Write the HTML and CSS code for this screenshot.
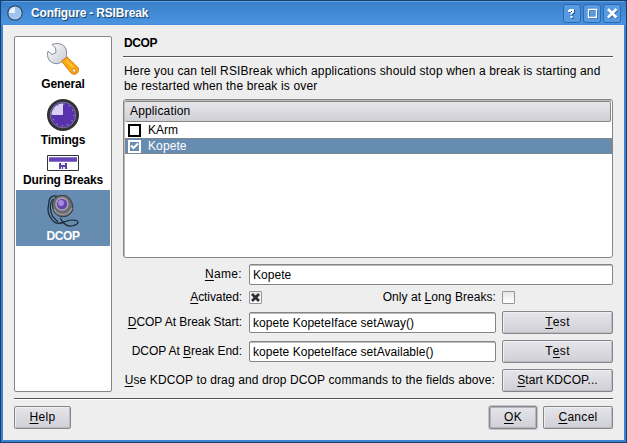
FILE: index.html
```html
<!DOCTYPE html>
<html lang="en">
<head>
<meta charset="utf-8">
<title>Configure - RSIBreak</title>
<link rel="stylesheet" href="styles.css">
</head>
<body>
<div class="window">
  <header class="titlebar">
    <svg class="app-icon" width="16" height="16" viewBox="0 0 16 16"><circle cx="8" cy="8" r="7.200" fill="#9fc3ef" stroke="#34485f" stroke-width="1.200"/><path d="M8 8V2A6 6 0 0 0 2 8Z" fill="#e9f2fd"/><circle cx="8" cy="8" r="5.800" fill="none" stroke="#d0e2f8" stroke-width=".8" stroke-dasharray="1 2"/></svg>
    <h1 class="title">Configure - RSIBreak</h1>
    <div class="controls">
      <span class="control"><svg width="16" height="17" viewBox="0 0 16 17"><path d="M4 6H6V5H9V7L7.500 8V9.500M7.500 11V13" fill="none" stroke="#1f5494" stroke-width="2" transform="translate(1 1)"/><path d="M4 6H6V5H9V7L7.500 8V9.500M7.500 11V13" fill="none" stroke="#fff" stroke-width="2"/></svg></span>
      <span class="control"><svg width="16" height="17" viewBox="0 0 16 17"><path d="M5.500 5.500H13.500V13.500H5.500Z" fill="none" stroke="#1f5494"/><path d="M4.500 4.500H12.500V12.500H4.500Z" fill="none" stroke="#fff" stroke-width="1.400"/></svg></span>
      <span class="control"><svg width="16" height="17" viewBox="0 0 16 17"><path d="M5 5L13 13M13 5L5 13" stroke="#1f5494" stroke-width="2.500"/><path d="M4 4L12.500 12.500M12.500 4L4 12.500" stroke="#fff" stroke-width="2.700"/></svg></span>
    </div>
  </header>
  <main class="body">
    <div class="content">
      <nav class="sidebar">
        <div class="item">
          <svg width="32" height="32" viewBox="0 0 32 32"><defs><linearGradient id="metal" x1="0" y1="0" x2="1" y2="1"><stop offset="0" stop-color="#fff"/><stop offset="1" stop-color="#c3c8d2"/></linearGradient></defs><path d="M5 1.500C10-.5 17 .5 19 6C20 9 19 12 20 14L15 18.500C11 22 5 21 2 17C.2 14 .2 11 1 8L5 11.500L9 9.500L8.500 5Z" fill="url(#metal)" stroke="#868b98"/><path d="M14.500 18L20 14L31 24.500C33 29 29 33 24.500 30.500Z" fill="#fda711" stroke="#ce7d12"/><path d="M19 17.500L26 24" stroke="#ffc43a" stroke-width="2"/><circle cx="27" cy="27.500" r="1.700" fill="#fff2d8" stroke="#b97520" stroke-width=".7"/></svg>
          <span>General</span>
        </div>
        <div class="item">
          <svg width="32" height="32" viewBox="0 0 32 32"><circle cx="16" cy="16" r="14.500" fill="#4c2b98" stroke="#303238" stroke-width="3"/><circle cx="16" cy="16" r="12.800" fill="#5732ac" stroke="#75777d"/><path d="M16 16V4.500A11.500 11.500 0 0 0 4.500 16Z" fill="#d9d1f1"/><circle cx="16" cy="16" r="10.800" fill="none" stroke="#a18bd9" stroke-width="1.400" stroke-dasharray="1 4.650"/></svg>
          <span>Timings</span>
        </div>
        <div class="item">
          <svg width="32" height="16" viewBox="0 0 32 16"><path d="M.5.5H31.500V15.500H.5Z" fill="#fff" stroke="#333"/><path d="M2 2H30V7H2Z" fill="#6745b8"/><path d="M2 2H30V3H2ZM2 6H30V7H2Z" fill="#8b76c8"/><path d="M12 8H20V14H12Z" fill="#5d42a5"/><path d="M14 8H18V10H14ZM14 12H15V14H14ZM16 12H18V14H16Z" fill="#e9e4f6"/></svg>
          <span>During Breaks</span>
        </div>
        <div class="item selected">
          <svg width="32" height="32" viewBox="0 0 32 32"><path d="M10 1C4 0 2 3 1.500 10C0 17 2 21 6 26C13 32 17 25 25 25C33 25 33 29 25 31C18 32 16 27 13 23M6 4C2 9 3 17 6 22L11 27" fill="none" stroke="#1a2630" stroke-width="1.200"/><path d="M9 2C13-.5 20-.5 23 4C26 9 27 14 24 18C20 23 12 23 8 18C5 14 4 6 9 2Z" fill="#6b6c70" stroke="#33363a"/><path d="M7 14C10 21 21 22 25 13" fill="none" stroke="#98989d" stroke-width="1.500"/><circle cx="15" cy="9" r="6" fill="#6844b0" stroke="#aaa8b3" stroke-width="1.400"/><circle cx="14" cy="8" r="3" fill="#a58be0"/></svg>
          <span>DCOP</span>
        </div>
      </nav>
      <section class="page">
        <h2 class="heading">DCOP</h2>
        <p class="intro">Here you can tell RSIBreak which applications should stop when a break is starting and<br>be restarted when the break is over</p>
        <div class="list">
          <div class="list-head">Application</div>
          <div class="row"><span class="tick"></span>KArm</div>
          <div class="row active"><span class="tick"><svg width="9" height="9" viewBox="0 0 9 9"><path d="M1 3.500L3.500 6 8 1.500" fill="none" stroke="#fff" stroke-width="2"/></svg></span>Kopete</div>
        </div>
        <div class="form">
          <label class="label name-label"><u>N</u>ame:</label>
          <div class="field wide">Kopete</div>
          <label class="label check-label"><u>A</u>ctivated:</label>
          <div class="checks">
            <span class="check"><svg width="11" height="11" viewBox="0 0 11 11"><path d="M2 2L9 9M9 2L2 9" stroke="#2d3034" stroke-width="2.800"/></svg></span>
            <label>Only at <u>L</u>ong Breaks:</label>
          </div>
          <span class="check"></span>
          <label class="label"><u>D</u>COP At Break Start:</label>
          <div class="field">kopete KopeteIface setAway()</div>
          <div class="button"><u>T</u>est</div>
          <label class="label">DCOP At <u>B</u>reak End:</label>
          <div class="field">kopete KopeteIface setAvailable()</div>
          <div class="button">T<u>e</u>st</div>
          <label class="label hint"><u>U</u>se KDCOP to drag and drop DCOP commands to the fields above:</label>
          <div class="button start"><u>S</u>tart KDCOP...</div>
        </div>
      </section>
    </div>
    <footer class="footer">
      <div class="button help"><u>H</u>elp</div>
      <div class="button ok"><u>O</u>K</div>
      <div class="button cancel"><u>C</u>ancel</div>
    </footer>
  </main>
</div>
</body>
</html>
```
FILE: styles.css
```css
* { box-sizing: border-box; }
body { margin: 0; overflow: hidden; font: 12px/15px "Liberation Sans", sans-serif; letter-spacing: .15px; color: #000; }
svg { display: block; flex: none; }
u { text-decoration: underline; text-underline-offset: 2px; text-decoration-thickness: 1px; }
.window { width: 627px; height: 443px; background: linear-gradient(#397fca, #4a94df 23px, #3c83cf 25px); border: 1px solid #173f6c; padding: 0 2px 2px; }
.titlebar { height: 24px; padding: 0 3px 1px 4px; display: flex; align-items: center; border-top: 1px solid #5fa1e3; }
.title { margin: 0 0 0 8px; font: bold 12px/15px "Liberation Sans", sans-serif; color: #fff; text-shadow: 1px 1px 1px #173f6c; letter-spacing: -.17px; }
.controls { display: flex; gap: 2px; margin-left: auto; padding-top: 1px; }
.control { width: 18px; height: 19px; border: 1px solid #296ab1; border-radius: 3px; background: #579ae0; }
.body { height: 415px; background: #eee; padding: 11px 11px 0; }
.content { display: flex; gap: 11px; height: 356px; }
.sidebar { width: 98px; border: 1px solid #858585; border-radius: 2px; background: #fff; padding: 1px; }
.item { padding: 5px 0 2px; display: flex; flex-direction: column; gap: 2px; align-items: center; font-weight: bold; letter-spacing: -.17px; white-space: nowrap; }
.selected { background: #678cb2; color: #fff; letter-spacing: -.4px; }
.page { width: 490px; }
.heading { margin: 0; height: 21px; border-bottom: 1px solid #555; font: bold 12px/15px "Liberation Sans", sans-serif; padding-left: 1px; box-shadow: 0 1px #fff; letter-spacing: -.4px; }
.intro { margin: 7px 0 0; height: 35px; padding-left: 1px; white-space: nowrap; }
.list { height: 159px; border: 1px solid #858585; border-radius: 3px; background: #fff; box-shadow: inset 1px 1px #bbb; padding: 1px 0 1px 1px; }
.list-head { height: 21px; margin-right: 1px; background: linear-gradient(#e6e6eb, #cfcfd6); border: 1px solid #858585; border-width: 1px 1px 1px 0; border-radius: 2px; padding: 1px 5px; line-height: 17px; }
.row { display: flex; align-items: center; gap: 7px; height: 16px; padding-left: 3px; letter-spacing: 0; }
.tick { width: 13px; height: 13px; border: 2px solid #000; }
.active { background: #678cb2; color: #fff; outline: 1px dotted #94806a; outline-offset: -1px; letter-spacing: .1px; }
.active .tick { border-color: #fff; }
.form { display: grid; grid-template-columns: 120px 247px 111px; column-gap: 6px; grid-template-rows: 21px 14px 23px 23px 23px; row-gap: 6px; margin-top: 6px; align-items: center; }
.label { text-align: right; white-space: nowrap; line-height: 23px; padding-right: 1px; align-self: start; letter-spacing: -.05px; }
.name-label { line-height: 21px; letter-spacing: .35px; }
.check-label { line-height: 13px; letter-spacing: -.1px; }
.field { height: 21px; border: 1px solid #858585; border-radius: 2px; background: #fff; box-shadow: inset 0 1px #bbb; padding: 1px 3px; line-height: 18px; letter-spacing: .04px; }
.wide { grid-column: span 2; }
.checks { display: flex; justify-content: space-between; align-items: center; align-self: start; line-height: 13px; letter-spacing: .06px; }
.check { width: 13px; height: 13px; align-self: start; border: 1px solid #96969a; border-radius: 1px; background: linear-gradient(#e8e8e8, #fff); }
.hint { grid-column: span 2; letter-spacing: .13px; }
.button { height: 23px; border: 1px solid #85858a; border-radius: 2px; background: linear-gradient(#e5e5ea, #cfcfd6); box-shadow: inset 1px 1px #efeff3, inset -1px -1px #bcbcc4; display: flex; align-items: center; justify-content: center; letter-spacing: .3px; padding-bottom: 1px; }
.start { letter-spacing: .05px; }
.footer { margin-top: 6px; border-top: 1px solid #555; box-shadow: inset 0 1px #fff; padding-top: 7px; display: flex; gap: 6px; }
.help { width: 57px; margin-right: auto; }
.ok { width: 48px; box-shadow: 0 0 0 1px #c5c5ca, inset 0 0 0 1px #b5b5bd; }
.cancel { width: 70px; }
```
